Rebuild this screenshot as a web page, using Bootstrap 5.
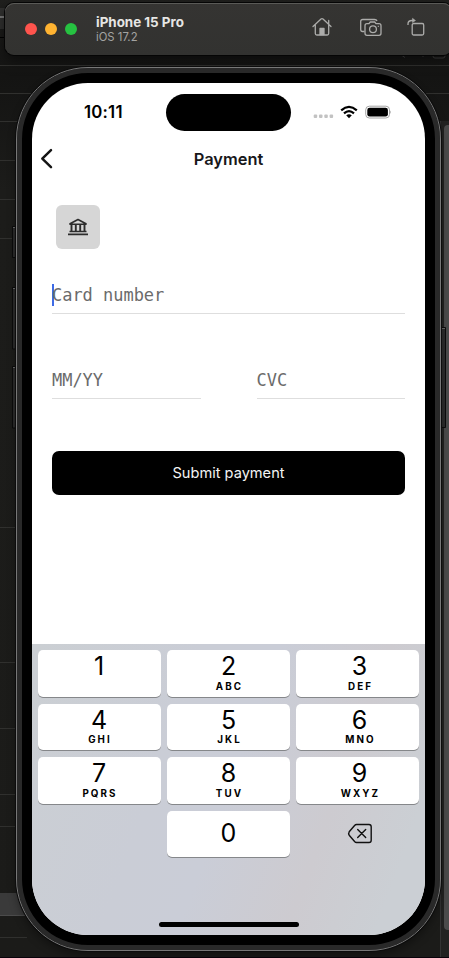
<!DOCTYPE html>
<html lang="en">
<head>
<meta charset="utf-8">
<meta name="viewport" content="width=device-width, initial-scale=1">
<title>Payment</title>
<link href="https://cdn.jsdelivr.net/npm/bootstrap@5.3.0/dist/css/bootstrap.min.css" rel="stylesheet">
<style>
html, body { height: 958px; overflow: hidden; }
body { width: 449px; background: #1c1c1a; font-family: Inter, "Liberation Sans", sans-serif; color: #000; }
.backdrop { position: absolute; left: 0; top: 0; z-index: 0; }
.stage { position: relative; z-index: 1; padding-top: 3px; }
.sim-bar { height: 52px; margin-left: 5px; margin-right: -3px; padding-left: 20px; padding-right: 26px; background: linear-gradient(#353432, #323230); border-radius: 9px; box-shadow: inset 0 1px 0 #5a5a57, 0 0 0 1px #050505, 0 5px 14px rgba(0,0,0,.55); }
.light { width: 12px; height: 12px; border-radius: 50%; }
.light-r { background: #ff544d; } .light-y { background: #ffb331; } .light-g { background: #26c241; }
.sim-title { margin-left: 19px; line-height: 15px; font-size: 13.4px; font-weight: 700; color: #e6e6e4; }
.sim-sub { font-size: 11.3px; line-height: 14px; font-weight: 400; color: #a3a3a1; }
.sim-tools { margin-top: -4px; gap: 24px; }
.tool-home { margin-right: 4px; }
.phone { width: 425px; height: 884px; margin: 12px 0 0 16px; border-radius: 72px; background: #000; border: 1px solid #777; box-shadow: inset 0 0 0 5px #292929, 0 0 0 1px #0c0c0c, 0 5px 8px rgba(0,0,0,.35); padding: 15px; }
.screen { width: 393px; height: 852px; border-radius: 56px; background: #fff; overflow: hidden; }
.status { height: 59px; padding: 11px 30px 11px 52px; }
.clock { width: 82px; font-size: 16.8px; font-weight: 600; line-height: 37px; letter-spacing: .2px; }
.island { width: 125px; height: 37px; border-radius: 19px; background: #000; }
.status-icons { margin-left: 22px; }
.nav-row { height: 34px; display: grid; grid-template-columns: 30px 1fr 30px; align-items: center; }
.nav-title { font-size: 16.4px; font-weight: 600; color: #17171a; }
.pay-form { padding: 28.500px 20px 0; }
.bank { width: 44px; height: 44px; margin-left: 4px; background: #d6d6d6; border-radius: 6px; border: 0; padding: 0; }
.field { height: 45px; border-bottom: 1px solid #dedede; font-family: "DejaVu Sans Mono", monospace; font-size: 17px; line-height: 20px; color: #6b6b6b; letter-spacing: -.03px; padding-bottom: 8px; }
.caret { width: 2px; height: 22px; margin-right: -2px; margin-bottom: -1px; background: #3e6be5; }
.card-field { margin-top: 20px; }
.pair { margin-top: 40px; gap: 56px; }
.pair .field { flex: 1; }
.submit { height: 44px; margin-top: 52px; padding: 2px 0 0; border-radius: 7px; border: 0; background: #000; color: #f4f4f4; font-size: 14.6px; }
.keyboard { height: 291px; padding: 6px 6px 0; background: linear-gradient(110deg, #cbcfd3 0%, #cacdd6 35%, #cacdd7 50%, #cdcbd0 72%, #cbcfd4 90%); }
.keys { display: grid; grid-template-columns: repeat(3, 123px); grid-auto-rows: 46.5px; gap: 7.1px 6px; }
.key { background: #fff; border-radius: 5px; box-shadow: 0 1px 0 #85878a; text-align: center; padding-top: 3px; }
.keys > :nth-child(3n) { padding-left: 4px; }
.keys > :nth-child(3n+1) { padding-right: 1px; }
.digit { font-size: 25px; line-height: 27px; height: 27.500px; }
.letters { font-size: 9.8px; line-height: 12px; font-weight: 700; letter-spacing: 2.1px; padding-left: 2px; }
.home-line { width: 140px; height: 5px; border-radius: 3px; background: #000; margin-bottom: 8px; }
</style>
<script src="https://cdn.jsdelivr.net/npm/bootstrap@5.3.0/dist/js/bootstrap.bundle.min.js"></script>
</head>
<body>
<svg class="backdrop" width="449" height="958" aria-hidden="true">
  <defs><linearGradient id="bg" x1="0" y1="0" x2="0" y2="1"><stop offset="0" stop-color="#20201e"/><stop offset=".08" stop-color="#141413"/><stop offset=".2" stop-color="#1c1c1a"/><stop offset="1" stop-color="#1b1b19"/></linearGradient></defs>
  <rect width="449" height="958" fill="url(#bg)"/>
  <path d="M0 8h6v21H0z" fill="#30302f"/><path d="M0 17h4" stroke="#777" stroke-width="2"/>
  <path d="M0 37.5h6" stroke="#000"/>
  <path d="M0 65.5h449M0 93.5h449M0 121.5h449M0 160.5h16M0 199.5h16M0 238.5h16M0 527.5h16M0 662.5h16M0 728.5h16M0 794.5h16M0 826.5h16M0 937.5h27" stroke="#30302e"/>
  <rect y="893" width="60" height="22" fill="#3a3a3a"/><path d="M0 915.5h60" stroke="#4b4b4b"/>
  <path d="M402 55.5l3 2M422 56h2M433 55v1q0 2 2 2h8q2 0 2-2v-1" stroke="#444" fill="none"/>
  <rect x="440" y="121" width="9" height="837" fill="#222221"/><path d="M440.500 121V958" stroke="#333"/>
  <rect x="444" y="125" width="8" height="805" rx="4" fill="#4b4b4b"/>
</svg>
<div class="stage">
  <header class="sim-bar d-flex align-items-center">
    <div class="d-flex gap-2"><span class="light light-r"></span><span class="light light-y"></span><span class="light light-g"></span></div>
    <div class="sim-title">iPhone 15 Pro<div class="sim-sub">iOS 17.2</div></div>
    <div class="sim-tools ms-auto d-flex align-items-center">
      <svg class="tool-home" width="20" height="20" viewBox="0 0 20 20" fill="none" stroke="#acacaa" stroke-width="1.300" stroke-linecap="round" stroke-linejoin="round"><path d="M1 9.500L9 2Q10 1.200 11 2L19 9.500M3.300 8V16.500Q3.300 18 4.800 18H15.200Q16.700 18 16.700 16.500V8M16.700 7V3.500"/><path d="M8 17.500V11.500H12V17.500Z" fill="#acacaa"/></svg>
      <svg width="22" height="20" viewBox="-1 0 22 20" fill="none" stroke="#acacaa" stroke-width="1.300" stroke-linejoin="round"><path d="M3.500 14.500H1.500Q-.3 14.500-.3 12.500V4.500Q-.3 2.500 1.700 2.500H13.500Q15.500 2.500 16 4"/><path d="M6 6.700H8L9.300 5H13.700L15 6.700H18Q20 6.700 20 8.700V16.300Q20 18.300 18 18.300H6Q4 18.300 4 16.300V8.700Q4 6.700 6 6.700Z"/><circle cx="12" cy="12.300" r="3.400"/><path d="M16.800 9.300h1"/></svg>
      <svg width="20" height="20" viewBox="0 0 20 20" fill="none" stroke="#acacaa" stroke-width="1.300" stroke-linejoin="round"><rect x="6.200" y="6.500" width="11.500" height="11.500" rx="1.500"/><path d="M2 8V7Q2 3.500 6 3.500H7"/><path d="M6.500 1.300L9.500 3.500L6.500 5.500Z" fill="#acacaa" stroke-width=".5"/></svg>
    </div>
  </header>
  <main class="phone">
    <div class="screen d-flex flex-column">
      <div class="status d-flex align-items-center">
        <div class="clock">10:11</div>
        <div class="island"></div>
        <svg class="status-icons" width="78" height="16" viewBox="0 0 78 16"><g fill="#c2c2c2"><rect x=".7" y="9.500" width="3.500" height="3.500" rx="1"/><rect x="6" y="9.500" width="3.500" height="3.500" rx="1"/><rect x="11.300" y="9.500" width="3.500" height="3.500" rx="1"/><rect x="16.600" y="9.500" width="3.500" height="3.500" rx="1"/></g>
          <g fill="none" stroke="#000" stroke-width="2.200"><path d="M28.200 5.300Q36 -1.500 43.800 5.300M31 8.400Q36 4 41 8.400"/></g><path d="M33.200 10.300Q36 8 38.800 10.300L36 13.200Z"/>
          <rect x="52.700" y="1.200" width="23.800" height="11.800" rx="3.600" fill="none" stroke="#a5a5a5"/><rect x="54.300" y="2.700" width="20.600" height="8.800" rx="2.300"/><path d="M77.300 5.400Q78.900 7.100 77.300 8.800Z" fill="#aaa"/></svg>
      </div>
      <div class="nav-row">
        <svg width="30" height="24" viewBox="0 0 30 24"><path d="M19 3.200L10.300 11.700L19 20.200" fill="none" stroke="#151515" stroke-width="2.500" stroke-linecap="round" stroke-linejoin="round"/></svg>
        <div class="nav-title text-center">Payment</div>
      </div>
      <div class="pay-form flex-grow-1">
        <button class="bank d-flex align-items-center justify-content-center" aria-label="Bank account">
          <svg width="20" height="18" viewBox="0 0 20 18" fill="none" stroke="#2c2c2c" stroke-width="1.600"><path d="M2 5.700L10 1.500L18 5.700V6.200H2Z" stroke-linejoin="round"/><path d="M3.500 6V14M7.800 6V14M12.200 6V14M16.500 6V14" stroke-width="1.900"/><path d="M1.500 13.500H18.500M0 16.300H20" stroke-width="1.700"/></svg>
        </button>
        <div class="field card-field d-flex align-items-end"><span class="caret"></span><span>Card number</span></div>
        <div class="pair d-flex">
          <div class="field d-flex align-items-end">MM/YY</div>
          <div class="field d-flex align-items-end">CVC</div>
        </div>
        <button class="submit btn w-100">Submit payment</button>
      </div>
      <div class="keyboard d-flex flex-column">
        <div class="keys">
          <div class="key"><div class="digit">1</div></div>
          <div class="key"><div class="digit">2</div><div class="letters">ABC</div></div>
          <div class="key"><div class="digit">3</div><div class="letters">DEF</div></div>
          <div class="key"><div class="digit">4</div><div class="letters">GHI</div></div>
          <div class="key"><div class="digit">5</div><div class="letters">JKL</div></div>
          <div class="key"><div class="digit">6</div><div class="letters">MNO</div></div>
          <div class="key"><div class="digit">7</div><div class="letters">PQRS</div></div>
          <div class="key"><div class="digit">8</div><div class="letters">TUV</div></div>
          <div class="key"><div class="digit">9</div><div class="letters">WXYZ</div></div>
          <div></div>
          <div class="key d-flex align-items-center justify-content-center pt-0"><div class="digit">0</div></div>
          <div class="d-flex align-items-center justify-content-center"><svg width="26" height="22" viewBox="0 0 26 22" fill="none" stroke="#111" stroke-width="1.400" stroke-linecap="round" stroke-linejoin="round"><path d="M9.500 1.500H22Q24.200 1.500 24.200 3.700V17.300Q24.200 19.500 22 19.500H9.500Q8.500 19.500 7.800 18.800L2.200 12.200Q1.200 10.500 2.200 8.800L7.800 2.200Q8.500 1.500 9.500 1.500ZM10.700 6.500L18.700 14.500M18.700 6.500L10.700 14.500"/></svg></div>
        </div>
        <div class="home-line mt-auto mx-auto"></div>
      </div>
    </div>
  </main>
</div>
<svg class="backdrop" width="449" height="958" aria-hidden="true">
  <g fill="#2b2b2b" stroke="#0b0b0b"><path d="M16 226.500H12.500V257.500H16M16 287.500H12.500V349H16M16 366.500H12.500V428H16M441.500 327.500H445.500V427.500H441.500"/></g>
  <path d="M13 227.500h3M13 288.500h3M13 367.500h3M442 328.500h3" stroke="#666"/>
  <path d="M0 957.500h449" stroke="#09020a"/>
</svg>
</body>
</html>
